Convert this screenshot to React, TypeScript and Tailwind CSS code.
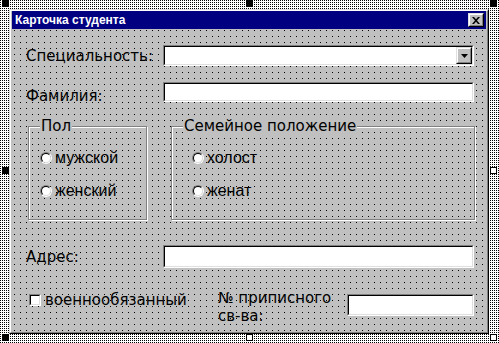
import type { ReactNode } from "react";

const label = "font-['DejaVu_Sans',sans-serif] text-[15px] leading-[18px] text-black whitespace-nowrap";
const optionText = "font-['Liberation_Sans',Arial,sans-serif] text-[16px] leading-[18px] text-black whitespace-nowrap";

function Sunken({ className, children }: { className?: string; children?: ReactNode }) {
    return (
        <div className={"border border-t-[#808080] border-l-[#808080] border-b-white border-r-white " + (className ?? "")}>
            <div className="flex h-full w-full justify-end border border-t-black border-l-black border-b-[#dfdfdf] border-r-[#dfdfdf] bg-white">
                {children}
            </div>
        </div>
    );
}

function Raised({ className, children }: { className?: string; children?: ReactNode }) {
    return (
        <div className={"border border-t-[#dfdfdf] border-l-[#dfdfdf] border-b-black border-r-black bg-[#c0c0c0] " + (className ?? "")}>
            <div className="flex h-full w-full items-center justify-center border border-t-white border-l-white border-b-[#808080] border-r-[#808080]">
                {children}
            </div>
        </div>
    );
}

function Radio({ text, className }: { text: string; className?: string }) {
    return (
        <div className={"flex items-center gap-[3px] " + (className ?? "")}>
            <div className="h-[12px] w-[12px] rounded-full border border-t-[#808080] border-l-[#808080] border-b-white border-r-white">
                <div className="h-full w-full rounded-full border border-t-black border-l-black border-b-[#dfdfdf] border-r-[#dfdfdf] bg-white" />
            </div>
            <span className={optionText}>{text}</span>
        </div>
    );
}

function Frame({ title, className, children }: { title: string; className?: string; children?: ReactNode }) {
    return (
        <div className={"relative h-[94px] border border-[#808080] shadow-[inset_1px_1px_0_#fff,1px_1px_0_#fff] " + (className ?? "")}>
            <span className={label + " absolute -top-[10px] left-[11px] bg-[#c0c0c0] px-[1px]"}>{title}</span>
            {children}
        </div>
    );
}

function Handle({ filled, className }: { filled: boolean; className: string }) {
    return (
        <div
            className={
                "absolute h-[7px] w-[7px] border border-black " + (filled ? "bg-black " : "bg-white ") + className
            }
        />
    );
}

export default function App() {
    return (
        <div className="relative h-[343px] w-[499px] overflow-hidden bg-[linear-gradient(to_bottom,transparent_1px,#fff_1px),linear-gradient(to_right,#000_1px,#fff_1px)] bg-[length:2px_2px] pl-[9px] pt-[9px]">
            {/* Окно формы */}
            <div className="h-[325px] w-[480px] border border-t-[#dfdfdf] border-l-[#dfdfdf] border-b-black border-r-black bg-[#c0c0c0]">
                <div className="flex h-full w-full flex-col border border-t-white border-l-white border-b-[#808080] border-r-[#808080]">
                    {/* Заголовок */}
                    <div className="mx-[1px] flex h-[18px] items-center justify-between bg-[#000080] pl-[3px] pr-[2px]">
                        <span className="font-['Liberation_Sans',Arial,sans-serif] text-[12px] font-bold leading-none text-white">
                            Карточка студента
                        </span>
                        <Raised className="h-[14px] w-[16px]">
                            <svg width="8" height="7" viewBox="0 0 8 7">
                                <path d="M0 0h2l2 2.2L6 0h2L5 3.5 8 7H6L4 4.8 2 7H0l3-3.5z" fill="#000" />
                            </svg>
                        </Raised>
                    </div>

                    {/* Клиентская область с сеткой */}
                    <div className="flex flex-1 flex-col bg-[linear-gradient(to_bottom,transparent_1px,#c0c0c0_1px),linear-gradient(to_right,#000_1px,#c0c0c0_1px)] bg-[length:6px_6px] bg-[position:3px_1px] pl-[15px] pt-[16px]">
                        <div className="flex h-[21px] items-center">
                            <span className={label + " w-[137px]"}>Специальность:</span>
                            <Sunken className="h-[21px] w-[311px]">
                                <Raised className="h-[17px] w-[16px]">
                                    <svg width="7" height="4" viewBox="0 0 7 4">
                                        <path d="M0 0h7L3.5 4z" fill="#000" />
                                    </svg>
                                </Raised>
                            </Sunken>
                        </div>

                        <div className="mt-[16px] flex h-[20px] items-start">
                            <span className={label + " mt-[5px] w-[137px]"}>Фамилия:</span>
                            <Sunken className="h-[20px] w-[311px]" />
                        </div>

                        <div className="mt-[24px] flex">
                            <Frame title="Пол" className="ml-[2px] w-[119px]">
                                <Radio text="мужской" className="absolute left-[11px] top-[22px]" />
                                <Radio text="женский" className="absolute left-[11px] top-[55px]" />
                            </Frame>
                            <Frame title="Семейное положение" className="ml-[24px] w-[304px]">
                                <Radio text="холост" className="absolute left-[20px] top-[22px]" />
                                <Radio text="женат" className="absolute left-[20px] top-[55px]" />
                            </Frame>
                        </div>

                        <div className="mt-[25px] flex h-[23px] items-center">
                            <span className={label + " w-[137px]"}>Адрес:</span>
                            <Sunken className="h-[23px] w-[311px]" />
                        </div>

                        <div className="mt-[21px] flex items-start">
                            <div className="ml-[3px] mt-[2px] flex w-[189px] items-center gap-[4px]">
                                <div className="h-[12px] w-[12px] border border-t-[#808080] border-l-[#808080] border-b-white border-r-white">
                                    <div className="h-full w-full border border-t-black border-l-black border-b-[#dfdfdf] border-r-[#dfdfdf] bg-white" />
                                </div>
                                <span className={label}>военнообязанный</span>
                            </div>
                            <div className={label + " w-[129px]"}>
                                № приписного
                                <br />
                                св-ва:
                            </div>
                            <Sunken className="mt-[5px] h-[22px] w-[127px]" />
                        </div>
                    </div>
                </div>
            </div>

            {/* Маркеры выделения */}
            <Handle filled className="left-[2px] top-[0px]" />
            <Handle filled className="left-[246px] top-[0px]" />
            <Handle filled className="left-[490px] top-[0px]" />
            <Handle filled className="left-[2px] top-[167px]" />
            <Handle filled={false} className="left-[490px] top-[167px]" />
            <Handle filled className="left-[2px] top-[334px]" />
            <Handle filled={false} className="left-[246px] top-[334px]" />
            <Handle filled={false} className="left-[490px] top-[334px]" />
        </div>
    );
}
